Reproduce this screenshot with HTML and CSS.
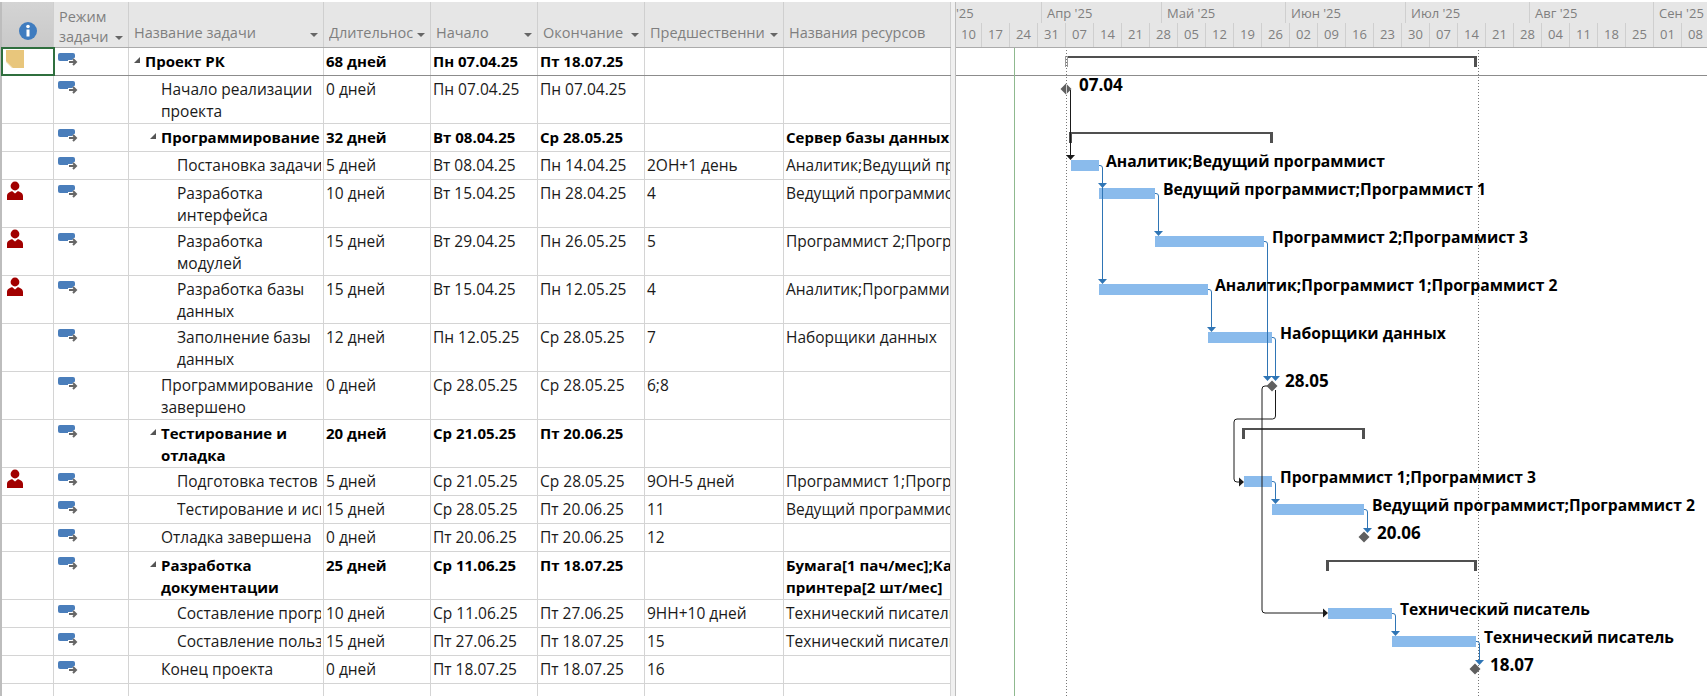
FILE: index.html
```html
<!DOCTYPE html>
<html lang="ru">
<head>
  <meta charset="UTF-8">
  <title>Проект РК</title>
  <link rel="stylesheet" href="styles.css">
</head>
<body>
  <svg class="defs" width="0" height="0">
    <symbol id="mode" viewBox="0 0 20 13">
      <rect x="0" y="0" width="17" height="8" rx="2" fill="#4a7ebb"/>
      <path d="M10 9h8M15 6l3 3-3 3" fill="none" stroke="#fff" stroke-width="4"/>
      <path d="M11 9h7M15 6l3 3-3 3" fill="none" stroke="#666" stroke-width="2"/>
    </symbol>
    <symbol id="person" viewBox="0 0 18 20">
      <circle cx="9" cy="5" r="4.400" fill="#a20000"/>
      <path d="M1 19v-4c0-3 3-4 5-5l3 2.500 3-2.500c2 1 5 2 5 5v4z" fill="#a20000"/>
    </symbol>
    <symbol id="fold" viewBox="0 0 6 6">
      <path d="M6 0v6H0z" fill="#555"/>
    </symbol>
  </svg>

  <div class="table">
    <div class="row head">
      <div class="cell c-info">
        <svg class="info-icon" width="20" height="20" viewBox="0 0 20 20">
          <circle cx="10" cy="10" r="9" fill="#3f7cbf"/>
          <rect x="8.500" y="8.500" width="3" height="7" fill="#fff"/>
          <circle cx="10" cy="5.500" r="1.800" fill="#fff"/>
        </svg>
      </div>
      <div class="cell c-mode"><span>Режим<br>задачи</span><i class="drop"></i></div>
      <div class="cell c-name"><span>Название задачи</span><i class="drop"></i></div>
      <div class="cell c-date"><span class="cut">Длительнос</span><i class="drop"></i></div>
      <div class="cell c-date"><span>Начало</span><i class="drop"></i></div>
      <div class="cell c-date"><span>Окончание</span><i class="drop"></i></div>
      <div class="cell c-pred"><span class="cut">Предшественни</span><i class="drop"></i></div>
      <div class="cell c-res"><span>Названия ресурсов</span></div>
    </div>

    <div class="row bold first">
      <div class="cell c-info selected"><span class="note"></span></div>
      <div class="cell c-mode"><svg class="mode-icon"><use href="#mode"/></svg></div>
      <div class="cell c-name lvl0"><svg class="fold"><use href="#fold"/></svg>Проект РК</div>
      <div class="cell c-date">68 дней</div>
      <div class="cell c-date">Пн 07.04.25</div>
      <div class="cell c-date">Пт 18.07.25</div>
      <div class="cell c-pred"></div>
      <div class="cell c-res"></div>
    </div>
    <div class="row tall">
      <div class="cell c-info"></div>
      <div class="cell c-mode"><svg class="mode-icon"><use href="#mode"/></svg></div>
      <div class="cell c-name lvl1">Начало реализации<br>проекта</div>
      <div class="cell c-date">0 дней</div>
      <div class="cell c-date">Пн 07.04.25</div>
      <div class="cell c-date">Пн 07.04.25</div>
      <div class="cell c-pred"></div>
      <div class="cell c-res"></div>
    </div>
    <div class="row bold">
      <div class="cell c-info"></div>
      <div class="cell c-mode"><svg class="mode-icon"><use href="#mode"/></svg></div>
      <div class="cell c-name lvl1"><svg class="fold"><use href="#fold"/></svg>Программирование</div>
      <div class="cell c-date">32 дней</div>
      <div class="cell c-date">Вт 08.04.25</div>
      <div class="cell c-date">Ср 28.05.25</div>
      <div class="cell c-pred"></div>
      <div class="cell c-res">Сервер базы данных</div>
    </div>
    <div class="row">
      <div class="cell c-info"></div>
      <div class="cell c-mode"><svg class="mode-icon"><use href="#mode"/></svg></div>
      <div class="cell c-name lvl2"><span class="clip">Постановка задачи</span></div>
      <div class="cell c-date">5 дней</div>
      <div class="cell c-date">Вт 08.04.25</div>
      <div class="cell c-date">Пн 14.04.25</div>
      <div class="cell c-pred">2ОН+1 день</div>
      <div class="cell c-res">Аналитик;Ведущий программист</div>
    </div>
    <div class="row tall">
      <div class="cell c-info"><svg class="person"><use href="#person"/></svg></div>
      <div class="cell c-mode"><svg class="mode-icon"><use href="#mode"/></svg></div>
      <div class="cell c-name lvl2">Разработка<br>интерфейса</div>
      <div class="cell c-date">10 дней</div>
      <div class="cell c-date">Вт 15.04.25</div>
      <div class="cell c-date">Пн 28.04.25</div>
      <div class="cell c-pred">4</div>
      <div class="cell c-res">Ведущий программист;Программист 1</div>
    </div>
    <div class="row tall">
      <div class="cell c-info"><svg class="person"><use href="#person"/></svg></div>
      <div class="cell c-mode"><svg class="mode-icon"><use href="#mode"/></svg></div>
      <div class="cell c-name lvl2">Разработка<br>модулей</div>
      <div class="cell c-date">15 дней</div>
      <div class="cell c-date">Вт 29.04.25</div>
      <div class="cell c-date">Пн 26.05.25</div>
      <div class="cell c-pred">5</div>
      <div class="cell c-res">Программист 2;Программист 3</div>
    </div>
    <div class="row tall">
      <div class="cell c-info"><svg class="person"><use href="#person"/></svg></div>
      <div class="cell c-mode"><svg class="mode-icon"><use href="#mode"/></svg></div>
      <div class="cell c-name lvl2">Разработка базы<br>данных</div>
      <div class="cell c-date">15 дней</div>
      <div class="cell c-date">Вт 15.04.25</div>
      <div class="cell c-date">Пн 12.05.25</div>
      <div class="cell c-pred">4</div>
      <div class="cell c-res">Аналитик;Программист 1;Программист 2</div>
    </div>
    <div class="row tall">
      <div class="cell c-info"></div>
      <div class="cell c-mode"><svg class="mode-icon"><use href="#mode"/></svg></div>
      <div class="cell c-name lvl2">Заполнение базы<br>данных</div>
      <div class="cell c-date">12 дней</div>
      <div class="cell c-date">Пн 12.05.25</div>
      <div class="cell c-date">Ср 28.05.25</div>
      <div class="cell c-pred">7</div>
      <div class="cell c-res">Наборщики данных</div>
    </div>
    <div class="row tall">
      <div class="cell c-info"></div>
      <div class="cell c-mode"><svg class="mode-icon"><use href="#mode"/></svg></div>
      <div class="cell c-name lvl1">Программирование<br>завершено</div>
      <div class="cell c-date">0 дней</div>
      <div class="cell c-date">Ср 28.05.25</div>
      <div class="cell c-date">Ср 28.05.25</div>
      <div class="cell c-pred">6;8</div>
      <div class="cell c-res"></div>
    </div>
    <div class="row tall bold">
      <div class="cell c-info"></div>
      <div class="cell c-mode"><svg class="mode-icon"><use href="#mode"/></svg></div>
      <div class="cell c-name lvl1"><svg class="fold"><use href="#fold"/></svg>Тестирование и<br>отладка</div>
      <div class="cell c-date">20 дней</div>
      <div class="cell c-date">Ср 21.05.25</div>
      <div class="cell c-date">Пт 20.06.25</div>
      <div class="cell c-pred"></div>
      <div class="cell c-res"></div>
    </div>
    <div class="row">
      <div class="cell c-info"><svg class="person"><use href="#person"/></svg></div>
      <div class="cell c-mode"><svg class="mode-icon"><use href="#mode"/></svg></div>
      <div class="cell c-name lvl2"><span class="clip">Подготовка тестов</span></div>
      <div class="cell c-date">5 дней</div>
      <div class="cell c-date">Ср 21.05.25</div>
      <div class="cell c-date">Ср 28.05.25</div>
      <div class="cell c-pred">9ОН-5 дней</div>
      <div class="cell c-res">Программист 1;Программист 3</div>
    </div>
    <div class="row">
      <div class="cell c-info"></div>
      <div class="cell c-mode"><svg class="mode-icon"><use href="#mode"/></svg></div>
      <div class="cell c-name lvl2"><span class="clip">Тестирование и исправление</span></div>
      <div class="cell c-date">15 дней</div>
      <div class="cell c-date">Ср 28.05.25</div>
      <div class="cell c-date">Пт 20.06.25</div>
      <div class="cell c-pred">11</div>
      <div class="cell c-res">Ведущий программист;Программист 2</div>
    </div>
    <div class="row">
      <div class="cell c-info"></div>
      <div class="cell c-mode"><svg class="mode-icon"><use href="#mode"/></svg></div>
      <div class="cell c-name lvl1">Отладка завершена</div>
      <div class="cell c-date">0 дней</div>
      <div class="cell c-date">Пт 20.06.25</div>
      <div class="cell c-date">Пт 20.06.25</div>
      <div class="cell c-pred">12</div>
      <div class="cell c-res"></div>
    </div>
    <div class="row tall bold">
      <div class="cell c-info"></div>
      <div class="cell c-mode"><svg class="mode-icon"><use href="#mode"/></svg></div>
      <div class="cell c-name lvl1"><svg class="fold"><use href="#fold"/></svg>Разработка<br>документации</div>
      <div class="cell c-date">25 дней</div>
      <div class="cell c-date">Ср 11.06.25</div>
      <div class="cell c-date">Пт 18.07.25</div>
      <div class="cell c-pred"></div>
      <div class="cell c-res">Бумага[1 пач/мес];Картридж для<br>принтера[2 шт/мес]</div>
    </div>
    <div class="row">
      <div class="cell c-info"></div>
      <div class="cell c-mode"><svg class="mode-icon"><use href="#mode"/></svg></div>
      <div class="cell c-name lvl2"><span class="clip">Составление программы</span></div>
      <div class="cell c-date">10 дней</div>
      <div class="cell c-date">Ср 11.06.25</div>
      <div class="cell c-date">Пт 27.06.25</div>
      <div class="cell c-pred">9НН+10 дней</div>
      <div class="cell c-res">Технический писатель</div>
    </div>
    <div class="row">
      <div class="cell c-info"></div>
      <div class="cell c-mode"><svg class="mode-icon"><use href="#mode"/></svg></div>
      <div class="cell c-name lvl2"><span class="clip">Составление пользователя</span></div>
      <div class="cell c-date">15 дней</div>
      <div class="cell c-date">Пт 27.06.25</div>
      <div class="cell c-date">Пт 18.07.25</div>
      <div class="cell c-pred">15</div>
      <div class="cell c-res">Технический писатель</div>
    </div>
    <div class="row">
      <div class="cell c-info"></div>
      <div class="cell c-mode"><svg class="mode-icon"><use href="#mode"/></svg></div>
      <div class="cell c-name lvl1">Конец проекта</div>
      <div class="cell c-date">0 дней</div>
      <div class="cell c-date">Пт 18.07.25</div>
      <div class="cell c-date">Пт 18.07.25</div>
      <div class="cell c-pred">16</div>
      <div class="cell c-res"></div>
    </div>
    <div class="row blank">
      <div class="cell c-info"></div>
      <div class="cell c-mode"></div>
      <div class="cell c-name"></div>
      <div class="cell c-date"></div>
      <div class="cell c-date"></div>
      <div class="cell c-date"></div>
      <div class="cell c-pred"></div>
      <div class="cell c-res"></div>
    </div>
  </div>

  <div class="split"></div>

  <div class="gantt">
    <div class="timescale">
      <div class="months">
        <div class="month m-first">'25</div>
        <div class="month m-120">Апр '25</div>
        <div class="month m-124">Май '25</div>
        <div class="month m-120">Июн '25</div>
        <div class="month m-124">Июл '25</div>
        <div class="month m-124">Авг '25</div>
        <div class="month m-last">Сен '25</div>
      </div>
      <div class="weeks">
        <div class="week week-first">10</div>
        <div class="week">17</div><div class="week">24</div><div class="week">31</div>
        <div class="week">07</div><div class="week">14</div><div class="week">21</div><div class="week">28</div>
        <div class="week">05</div><div class="week">12</div><div class="week">19</div><div class="week">26</div>
        <div class="week">02</div><div class="week">09</div><div class="week">16</div><div class="week">23</div>
        <div class="week">30</div><div class="week">07</div><div class="week">14</div><div class="week">21</div><div class="week">28</div>
        <div class="week">04</div><div class="week">11</div><div class="week">18</div><div class="week">25</div>
        <div class="week">01</div><div class="week">08</div>
      </div>
    </div>

    <svg class="chart" width="751" height="648" viewBox="956 48 751 648">
      <!-- grid -->
      <line class="rowline" x1="956" y1="75.500" x2="1707" y2="75.500"/>
      <line class="today" x1="1014.500" y1="48" x2="1014.500" y2="696"/>
      <line class="dots" x1="1066.500" y1="50" x2="1066.500" y2="696"/>
      <line class="dots" x1="1478.500" y1="50" x2="1478.500" y2="696"/>

      <!-- summary brackets -->
      <path class="summary" d="M1067 56h410v11h-3v-9h-407z"/>
      <path class="summary-start" d="M1065 56h1v11h-1zM1067 56h1v11h-1z"/>
      <path class="summary" d="M1069 132h204v11h-3v-9h-198v9h-3z"/>
      <path class="summary" d="M1242 428h123v11h-3v-9h-117v9h-3z"/>
      <path class="summary" d="M1326 560h151v11h-3v-9h-145v9h-3z"/>

      <!-- bars -->
      <rect class="bar" x="1071" y="160" width="28" height="11"/>
      <rect class="bar" x="1099" y="188" width="56" height="11"/>
      <rect class="bar" x="1155" y="236" width="109" height="11"/>
      <rect class="bar" x="1099" y="284" width="109" height="11"/>
      <rect class="bar" x="1208" y="332" width="64" height="11"/>
      <rect class="bar" x="1244" y="476" width="28" height="11"/>
      <rect class="bar" x="1272" y="504" width="92" height="11"/>
      <rect class="bar" x="1328" y="608" width="64" height="11"/>
      <rect class="bar" x="1392" y="636" width="84" height="11"/>

      <!-- links -->
      <path class="link" d="M1070.500 90V156"/>
      <path class="arrow-k" d="M1066 155h9l-4.500 5z"/>
      <path class="link-b" d="M1099 165.500h1q2.500 0 2.500 2.500V280"/>
      <path class="arrow-b" d="M1098 183h9l-4.500 5zM1098 279h9l-4.500 5z"/>
      <path class="link-b" d="M1155 193.500h1q2.500 0 2.500 2.500V232"/>
      <path class="arrow-b" d="M1154 231h9l-4.500 5z"/>
      <path class="link-b" d="M1208 289.500h1q2.500 0 2.500 2.500V328"/>
      <path class="arrow-b" d="M1207 327h9l-4.500 5z"/>
      <path class="link-b" d="M1264 241.500h1q2.500 0 2.500 2.500V377"/>
      <path class="link-b" d="M1272 337.500h1q2.500 0 2.500 2.500V377"/>
      <path class="arrow-b" d="M1263 376h9l-4.500 5zM1271 376h9l-4.500 5z"/>
      <path class="link" d="M1275.500 390V416q0 3-3 3H1237q-3 0-3 3V479q0 3 3 3H1240"/>
      <path class="arrow-k" d="M1239 477.500l5 4.500-5 4.500z"/>
      <path class="link" d="M1268 386h-3q-3 0-3 3V610q0 3 3 3H1324"/>
      <path class="arrow-k" d="M1323 608.500l5 4.500-5 4.500z"/>
      <path class="link-b" d="M1272 481.500h1q2.500 0 2.500 2.500V500"/>
      <path class="arrow-b" d="M1271 499h9l-4.500 5z"/>
      <path class="link-b" d="M1364 509.500h1q2.500 0 2.500 2.500V529"/>
      <path class="arrow-b" d="M1363 528h9l-4.500 5z"/>
      <path class="link-b" d="M1392 613.500h1q2.500 0 2.500 2.500V632"/>
      <path class="arrow-b" d="M1391 631h9l-4.500 5z"/>
      <path class="link-b" d="M1476 641.500h1q2.500 0 2.500 2.500V661"/>
      <path class="arrow-b" d="M1475 660h9l-4.500 5z"/>

      <!-- milestones -->
      <path class="stone" d="M1066 83.500l5.500 5.500-5.500 5.500-5.500-5.500z"/>
      <line class="stone-mid" x1="1066.500" y1="84" x2="1066.500" y2="94"/>
      <path class="stone" d="M1272 380.500l5.500 5.500-5.500 5.500-5.500-5.500z"/>
      <path class="stone" d="M1364 531.500l5.500 5.500-5.500 5.500-5.500-5.500z"/>
      <path class="stone" d="M1475 663.500l5.500 5.500-5.500 5.500-5.500-5.500z"/>

      <!-- labels -->
      <text class="label date" x="1079" y="91">07.04</text>
      <text class="label" x="1106" y="167">Аналитик;Ведущий программист</text>
      <text class="label" x="1163" y="195">Ведущий программист;Программист 1</text>
      <text class="label" x="1272" y="243">Программист 2;Программист 3</text>
      <text class="label" x="1215" y="291">Аналитик;Программист 1;Программист 2</text>
      <text class="label" x="1280" y="339">Наборщики данных</text>
      <text class="label date" x="1285" y="387">28.05</text>
      <text class="label" x="1280" y="483">Программист 1;Программист 3</text>
      <text class="label" x="1372" y="511">Ведущий программист;Программист 2</text>
      <text class="label date" x="1377" y="539">20.06</text>
      <text class="label" x="1400" y="615">Технический писатель</text>
      <text class="label" x="1484" y="643">Технический писатель</text>
      <text class="label date" x="1490" y="671">18.07</text>
    </svg>
  </div>
</body>
</html>
```

FILE: styles.css
```css
html, body {
  margin: 0;
  height: 696px;
  overflow: hidden;
}
body {
  display: flex;
  font-family: "Open Sans", "Noto Sans", sans-serif;
  font-size: 15.5px;
  line-height: 22px;
  color: #1a1a1a;
  background: #fff;
  padding-top: 2px;
  box-sizing: border-box;
  position: relative;
}
.defs {
  position: absolute;
}

/* table */
.table {
  width: 951px;
  flex: none;
  display: flex;
  flex-direction: column;
  border-left: 2px solid #bdbdbd;
  box-sizing: border-box;
}
.row {
  display: flex;
  height: 28px;
  flex: none;
  box-sizing: border-box;
  border-bottom: 1px solid #d4d4d4;
}
.row.tall {
  height: 48px;
}
.row.bold {
  font-size: 15px;
  font-weight: 700;
  color: #000;
}
.row.first {
  border-bottom-color: #8c8c8c;
}
.row.blank {
  flex: 1;
  border-bottom: 0;
}
.cell {
  box-sizing: border-box;
  border-right: 1px solid #d4d4d4;
  padding: 2px 2px 0;
  overflow: hidden;
  white-space: nowrap;
  position: relative;
}
.c-info { width: 52px; }
.c-mode { width: 75px; }
.c-name { width: 195px; }
.c-date { width: 107px; }
.c-pred { width: 139px; }
.c-res { width: 167px; padding-right: 0; }

.lvl0 { padding-left: 16px; }
.lvl1 { padding-left: 32px; }
.lvl2 { padding-left: 48px; padding-right: 2px; }
.clip {
  display: block;
  overflow: hidden;
}
.fold {
  position: absolute;
  width: 6px;
  height: 6px;
  top: 9px;
  margin-left: -11px;
}

/* header */
.row.head {
  height: 46px;
  border-bottom: 1px solid #ababab;
  background: #e6e6e6;
  color: #7f7f7f;
  font-size: 14.5px;
}
.row.head .cell {
  display: flex;
  align-items: flex-end;
  justify-content: space-between;
  padding: 0 5px 3px 5px;
  border-right-color: #cfcfcf;
}
.row.head .c-info {
  background: linear-gradient(#d4d4d4, #c9c9c9);
  padding: 0;
  align-items: center;
  justify-content: center;
}
.row.head .c-mode {
  padding-bottom: 0;
  line-height: 20px;
}
.row.head .cut {
  overflow: hidden;
}
.info-icon {
  margin-top: 12px;
}
.drop {
  flex: none;
  width: 0;
  height: 0;
  margin-bottom: 7px;
  border-left: 4px solid transparent;
  border-right: 4px solid transparent;
  border-top: 4px solid #666;
}

/* icons */
.selected {
  outline: 2px solid #2f6f3e;
  outline-offset: -1px;
  overflow: visible;
  z-index: 1;
}
.note {
  display: block;
  width: 18px;
  height: 18px;
  margin-left: 2px;
  background: linear-gradient(45deg, #fff 0, #fff 16%, #f3e2bd 17%, #f3e2bd 19%, #e8c67c 20%);
}
.mode-icon {
  position: absolute;
  width: 20px;
  height: 13px;
  left: 4px;
  top: 5px;
}
.person {
  position: absolute;
  width: 18px;
  height: 20px;
  left: 4px;
  top: 1px;
}

/* gantt */
.split {
  width: 4px;
  flex: none;
  background: #f0f0f0;
  border-right: 1px solid #bdbdbd;
}
.gantt {
  flex: 1;
  min-width: 0;
  display: flex;
  flex-direction: column;
}
.timescale {
  height: 46px;
  flex: none;
  background: #e6e6e6;
  border-bottom: 1px solid #ababab;
  box-sizing: border-box;
  color: #7f7f7f;
  font-size: 13px;
}
.months {
  display: flex;
  height: 21px;
}
.month {
  flex: none;
  box-sizing: border-box;
  padding-left: 5px;
  border-right: 1px solid #cfcfcf;
}
.m-first { width: 86px; padding-left: 0; }
.m-120 { width: 120px; }
.m-124 { width: 124px; }
.m-last { width: 60px; border-right: 0; }
.weeks {
  display: flex;
  height: 24px;
}
.week {
  flex: none;
  width: 28px;
  box-sizing: border-box;
  text-align: center;
  border-right: 1px solid #cfcfcf;
}
.week-first {
  width: 26px;
}

.chart {
  display: block;
}
.rowline {
  stroke: #8c8c8c;
}
.today {
  stroke: #8fb98f;
}
.dots {
  stroke: #777;
  stroke-dasharray: 1 2;
}
.summary {
  fill: #505050;
}
.summary-start {
  fill: #9a9a9a;
}
.bar {
  fill: #8abbec;
}
.link, .link-b {
  fill: none;
  stroke-width: 1;
}
.link {
  stroke: #1a1a1a;
}
.link-b {
  stroke: #2f75b5;
}
.arrow-k {
  fill: #1a1a1a;
}
.arrow-b {
  fill: #2f75b5;
}
.stone {
  fill: #5f5f5f;
}
.stone-mid {
  stroke: #cfcfcf;
}
.label {
  font-size: 15.7px;
  font-weight: 700;
  fill: #000;
}
.label.date {
  font-size: 17px;
}
```
